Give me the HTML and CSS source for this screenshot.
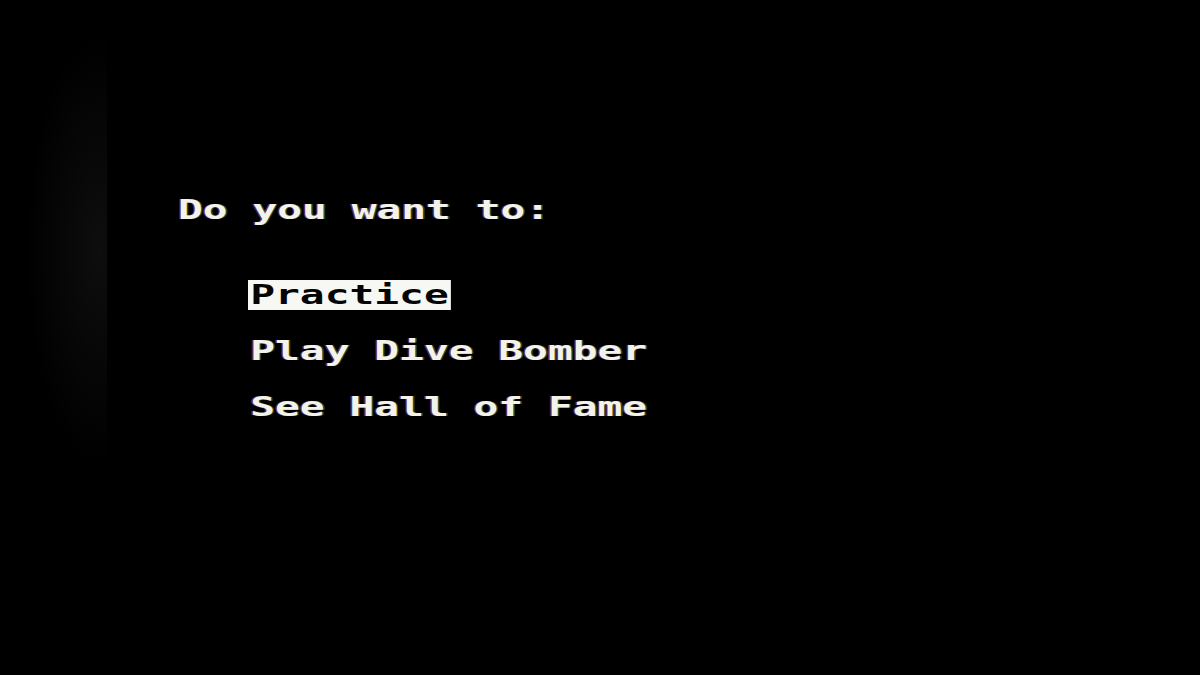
FILE: index.html
```html
<!DOCTYPE html>
<html lang="en">
<head>
<meta charset="utf-8">
<title>Dive Bomber</title>
<link rel="stylesheet" href="styles.css">
</head>
<body>
<main class="screen">
  <div class="prompt"><span class="line">Do you want to:</span></div>
  <ul class="menu">
    <li class="item"><span class="line"><span class="label selected">Practice</span></span></li>
    <li class="item"><span class="line"><span class="label">Play Dive Bomber</span></span></li>
    <li class="item"><span class="line"><span class="label">See Hall of Fame</span></span></li>
  </ul>
</main>
</body>
</html>
```

FILE: styles.css
```css
html, body {
  margin: 0;
  padding: 0;
  width: 1200px;
  height: 675px;
  overflow: hidden;
  background: #000;
}

.screen {
  box-sizing: border-box;
  width: 1200px;
  height: 675px;
  padding-top: 182px;
  display: flex;
  flex-direction: column;
  background:
    radial-gradient(ellipse 75px 220px at 100px 250px, rgba(255,255,255,0.055), rgba(255,255,255,0) 100%) 0 0 / 107px 100% no-repeat,
    #000;
  font-family: "DejaVu Sans Mono", "Liberation Mono", monospace;
  font-weight: bold;
  font-size: 26px;
  color: #f3f3ec;
}

.line {
  display: inline-block;
  white-space: pre;
  line-height: 56px;
  transform: scaleX(1.585);
  transform-origin: 0 50%;
  text-shadow: -1px 0 rgba(255, 120, 255, 0.35), 1px 0 rgba(140, 255, 140, 0.3);
}

.prompt {
  height: 56px;
  padding-left: 178px;
}

.menu {
  list-style: none;
  margin: 29px 0 0 0;
  padding: 0 0 0 248px;
  display: flex;
  flex-direction: column;
}

.item {
  height: 56px;
}

.label {
  padding: 0 1.4px;
}

.selected {
  background: #f7f7f4;
  color: #050505;
  text-shadow: none;
}
```
